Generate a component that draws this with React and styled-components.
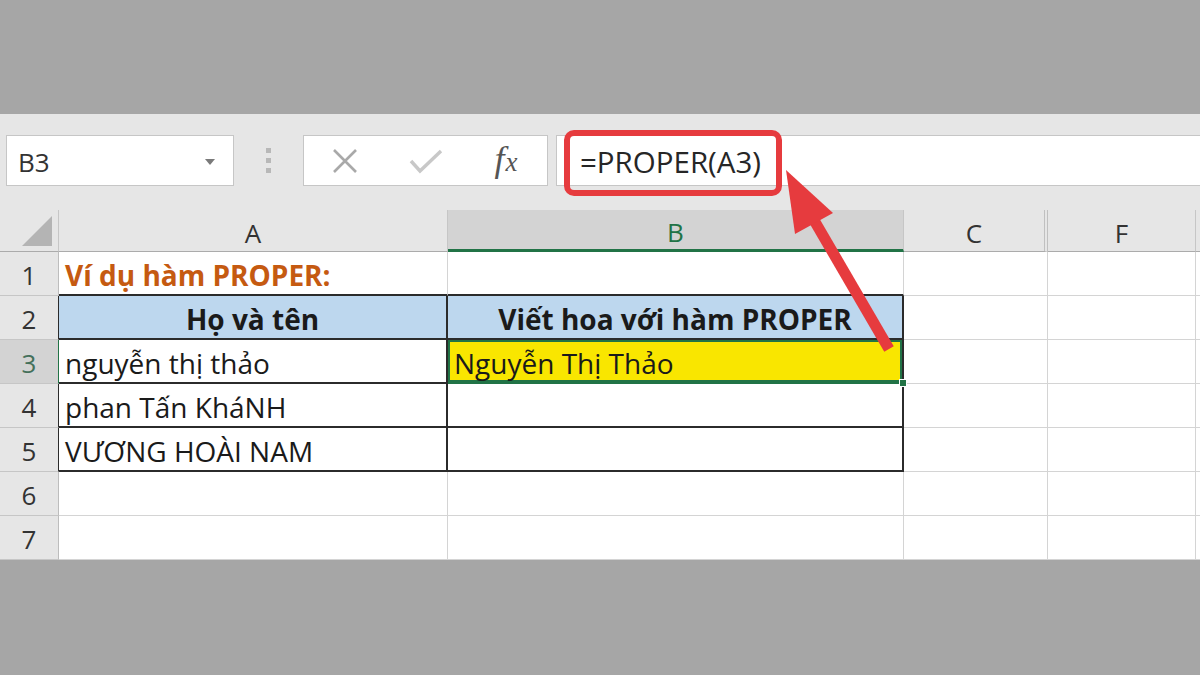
import styled, { createGlobalStyle } from 'styled-components'

const GlobalStyle = createGlobalStyle`
  html, body { margin: 0; padding: 0; background: #a6a6a6; }
  * { box-sizing: border-box; }
`

const GRID = '#d4d4d4'
const DARK = '#2b2b2b'
const GREEN = '#217346'
const RED = '#e63b3e'

const Page = styled.div`
  position: relative;
  width: 1200px;
  height: 675px;
  display: flex;
  flex-direction: column;
  background: #a6a6a6;
  overflow: hidden;
  font-family: "Open Sans", "Noto Sans", sans-serif;
  color: #262626;
`

const TopBand = styled.div`
  height: 114px;
  flex: none;
`

const Toolbar = styled.div`
  height: 96px;
  flex: none;
  background: #e6e6e6;
  display: flex;
  align-items: flex-start;
  padding: 21px 0 0 6px;
`

const NameBox = styled.div`
  width: 228px;
  height: 51px;
  background: #fff;
  border: 1px solid #c6c6c6;
  display: flex;
  align-items: center;
  justify-content: space-between;
  padding: 2px 18px 0 11px;
  font-size: 26px;
  color: #333;
`

const Caret = styled.span`
  width: 0;
  height: 0;
  border-left: 5px solid transparent;
  border-right: 5px solid transparent;
  border-top: 6px solid #7a7a7a;
`

const Dots = styled.div`
  width: 69px;
  height: 51px;
  display: flex;
  flex-direction: column;
  align-items: center;
  justify-content: center;
  gap: 5px;
  span {
    width: 5px;
    height: 5px;
    background: #b8b8b8;
  }
`

const FxButtons = styled.div`
  width: 245px;
  height: 51px;
  background: #fff;
  border: 1px solid #c6c6c6;
  display: grid;
  grid-template-columns: repeat(3, 1fr);
  align-items: center;
  justify-items: center;
`

const FxLabel = styled.span`
  font-family: "Liberation Serif", "DejaVu Serif", serif;
  font-style: italic;
  font-size: 36px;
  color: #555;
  line-height: 1;
  margin-top: -4px;
  letter-spacing: 1px;
  sub {
    font-size: 27px;
    vertical-align: baseline;
  }
`

const FormulaInput = styled.div`
  position: relative;
  margin-left: 8px;
  flex: 1;
  height: 51px;
  background: #fff;
  border: 1px solid #c6c6c6;
  border-right: none;
  display: flex;
  align-items: center;
  padding: 1px 0 0 23px;
  font-size: 29.5px;
  color: #262626;
`

const Highlight = styled.div`
  position: absolute;
  left: 7px;
  top: -6px;
  width: 218px;
  height: 66px;
  border: 6px solid ${RED};
  border-radius: 10px;
  pointer-events: none;
`

const Sheet = styled.div`
  flex: none;
  height: 350px;
  background: #fff;
  display: grid;
  grid-template-columns: 59px 389px 456px 144px 148px 1fr;
  grid-template-rows: 42px repeat(7, 44px);
`

const ColHead = styled.div`
  background: ${p => (p.$active ? '#d3d3d3' : '#e6e6e6')};
  color: ${p => (p.$active ? GREEN : '#333')};
  border-right: ${p => p.$double ? '4px double #c0c0c0' : '1px solid #c6c6c6'};
  border-bottom: ${p => (p.$active ? `3px solid ${GREEN}` : '1px solid #ababab')};
  display: flex;
  align-items: center;
  justify-content: center;
  font-size: 26px;
  padding-top: 4px;
`

const Corner = styled.div`
  background: #e6e6e6;
  border-right: 1px solid #c6c6c6;
  border-bottom: 1px solid #ababab;
  display: flex;
  align-items: flex-end;
  justify-content: flex-end;
  padding: 0 6px 5px 0;
  &::after {
    content: '';
    width: 0;
    height: 0;
    border-left: 30px solid transparent;
    border-bottom: 30px solid #b4b4b4;
  }
`

const RowHead = styled.div`
  background: ${p => (p.$active ? '#d3d3d3' : '#e6e6e6')};
  color: ${p => (p.$active ? '#44705a' : '#333')};
  border-right: 1px solid ${p => (p.$active ? GREEN : p.$edge ? DARK : '#bdbdbd')};
  border-bottom: 1px solid #c6c6c6;
  display: flex;
  align-items: center;
  justify-content: center;
  font-size: 26px;
  padding-top: 3px;
`

const Cell = styled.div`
  position: relative;
  background: ${p => p.$fill || '#fff'};
  border-right: ${p => (p.$right ? `2px solid ${p.$right}` : `1px solid ${GRID}`)};
  border-bottom: ${p => (p.$bottom ? `2px solid ${p.$bottom}` : `1px solid ${GRID}`)};
  display: flex;
  align-items: center;
  justify-content: ${p => (p.$center ? 'center' : 'flex-start')};
  padding: 4px 0 0 ${p => (p.$center ? '0' : '6px')};
  font-size: 28px;
  font-weight: ${p => (p.$bold ? 700 : 400)};
  color: ${p => p.$color || '#1a1a1a'};
  white-space: nowrap;
  box-shadow: ${p => (p.$selected ? `inset 0 0 0 2px ${GREEN}` : 'none')};
`

const FillHandle = styled.span`
  position: absolute;
  right: -5px;
  bottom: -5px;
  width: 8px;
  height: 8px;
  background: ${GREEN};
  border: 1px solid #fff;
  z-index: 2;
`

const Overlay = styled.svg`
  position: absolute;
  left: 0;
  top: 0;
  pointer-events: none;
  z-index: 5;
`

const BottomBand = styled.div`
  flex: 1;
`

const rows = [
  { n: 1, a: 'Ví dụ hàm PROPER:', b: '' },
  { n: 2, a: 'Họ và tên', b: 'Viết hoa với hàm PROPER', head: true },
  { n: 3, a: 'nguyễn thị thảo', b: 'Nguyễn Thị Thảo', active: true },
  { n: 4, a: 'phan Tấn KháNH', b: '' },
  { n: 5, a: 'VƯƠNG HOÀI NAM', b: '' },
  { n: 6, a: '', b: '' },
  { n: 7, a: '', b: '' },
]

function SheetRow({ row }) {
  const inTable = row.n >= 2 && row.n <= 5
  const topOfTable = row.n === 1
  const edge = inTable ? DARK : null
  const bottom = topOfTable || inTable ? DARK : null
  return (
    <>
      <RowHead $active={row.active} $edge={inTable}>{row.n}</RowHead>
      <Cell
        $right={edge}
        $bottom={bottom}
        $fill={row.head ? '#bdd7ee' : null}
        $center={row.head}
        $bold={row.head || row.n === 1}
        $color={row.n === 1 ? '#c55a11' : null}
      >
        {row.a}
      </Cell>
      <Cell
        $right={edge}
        $bottom={row.active ? GREEN : bottom}
        $fill={row.head ? '#bdd7ee' : row.active ? '#f9e600' : null}
        $center={row.head}
        $bold={row.head}
        $selected={row.active}
      >
        {row.b}
        {row.active && <FillHandle />}
      </Cell>
      <Cell />
      <Cell />
      <Cell />
    </>
  )
}

export default function App() {
  return (
    <>
      <GlobalStyle />
      <Page>
        <TopBand />
        <Toolbar>
          <NameBox>
            B3
            <Caret />
          </NameBox>
          <Dots>
            <span />
            <span />
            <span />
          </Dots>
          <FxButtons>
            <svg width="26" height="26" viewBox="0 0 26 26">
              <path d="M2 2 L24 24 M24 2 L2 24" stroke="#a9a9a9" strokeWidth="2.6" fill="none" />
            </svg>
            <svg width="34" height="26" viewBox="0 0 34 26">
              <path d="M2 13 L11 23 L32 3" stroke="#c8c8c8" strokeWidth="3.4" fill="none" />
            </svg>
            <FxLabel>
              f<sub>x</sub>
            </FxLabel>
          </FxButtons>
          <FormulaInput>
            =PROPER(A3)
            <Highlight />
          </FormulaInput>
        </Toolbar>
        <Sheet>
          <Corner />
          <ColHead>A</ColHead>
          <ColHead $active>B</ColHead>
          <ColHead $double>C</ColHead>
          <ColHead>F</ColHead>
          <ColHead />
          {rows.map(r => (
            <SheetRow key={r.n} row={r} />
          ))}
        </Sheet>
        <BottomBand />
        <Overlay width="1200" height="675" viewBox="0 0 1200 675">
          <line x1="889" y1="349" x2="811" y2="215" stroke={RED} strokeWidth="11" />
          <polygon points="786,170 833,213 795,234" fill={RED} />
        </Overlay>
      </Page>
    </>
  )
}
